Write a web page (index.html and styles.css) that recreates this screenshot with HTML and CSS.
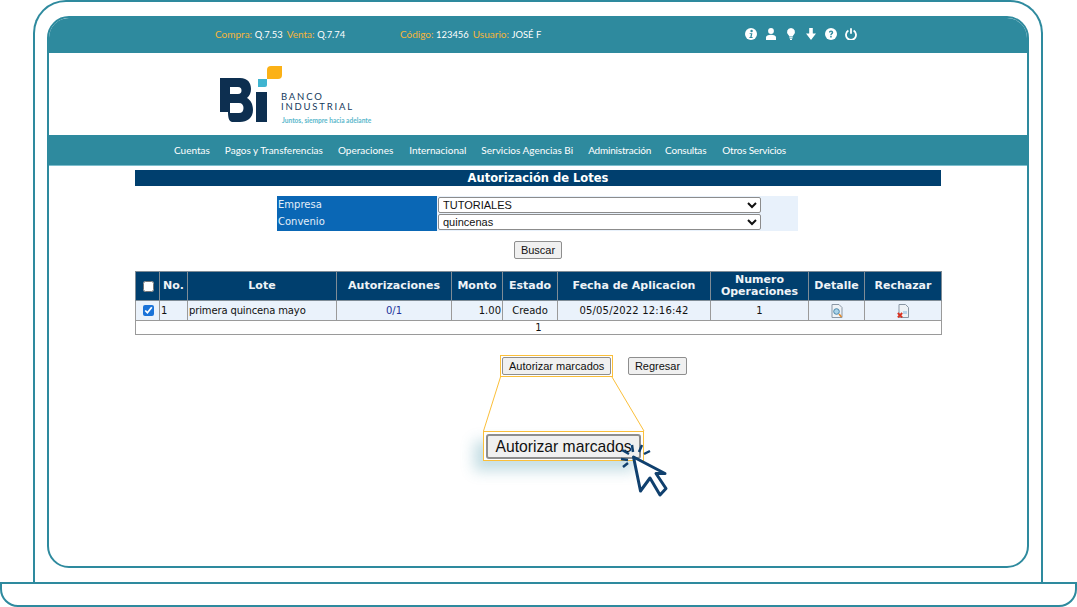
FILE: index.html
```html
<!DOCTYPE html>
<html lang="es">
<head>
<meta charset="utf-8">
<title>Autorización de Lotes</title>
<link rel="stylesheet" href="styles.css">
</head>
<body>
<div class="page">
  <div class="lid">
    <div class="screen">
      <header class="topbar">
        <div class="rates"><span class="key">Compra:</span> <b>Q.7.53</b><span class="key sp">Venta:</span> <b>Q.7.74</b></div>
        <div class="user"><span class="key">Código:</span> <b>123456</b><span class="key sp2">Usuario:</span> <b>JOSÉ F</b></div>
        <div class="tools">
          <svg class="ti" viewBox="0 0 12 12"><circle cx="6" cy="6" r="6" fill="#fff"/><circle cx="6.6" cy="3" r="1.2" fill="#2e8a9e"/><path d="M4.6 5.2h2.8L6.6 9h1v.9H4.4V9h.9l.6-2.9H4.6z" fill="#2e8a9e"/></svg>
          <svg class="ti" viewBox="0 0 12 12"><circle cx="6" cy="3" r="2.9" fill="#fff"/><path d="M1 12V9.5C1 7.5 3 6.7 6 6.7s5 .8 5 2.8V12z" fill="#fff"/></svg>
          <svg class="ti" viewBox="0 0 12 12"><path d="M6 0a4 4 0 0 1 2.6 7c-.6.6-.8 1-.8 1.6H4.2c0-.6-.2-1-.8-1.6A4 4 0 0 1 6 0z" fill="#fff"/><rect x="4.4" y="9.2" width="3.2" height="1.2" fill="#fff"/><rect x="5" y="10.8" width="2" height="1.2" fill="#fff"/></svg>
          <svg class="ti" viewBox="0 0 12 12"><path d="M4.2 0h3.6v5.6H11L6 12 1 5.6h3.2z" fill="#fff"/></svg>
          <svg class="ti" viewBox="0 0 12 12"><circle cx="6" cy="6" r="6" fill="#fff"/><path d="M3.9 4.6C3.9 3.3 4.8 2.5 6.1 2.5c1.2 0 2.1.8 2.1 1.9 0 1.6-1.6 1.6-1.6 2.9H5.2c0-1.9 1.5-1.9 1.5-2.8 0-.4-.2-.7-.6-.7-.5 0-.7.3-.8.8z" fill="#2e8a9e"/><rect x="5.2" y="8" width="1.5" height="1.5" fill="#2e8a9e"/></svg>
          <svg class="ti" viewBox="0 0 12 12"><path d="M3.4 2.6a5 5 0 1 0 5.2 0" fill="none" stroke="#fff" stroke-width="1.8"/><path d="M6 .3v5.4" stroke="#fff" stroke-width="1.8"/></svg>
        </div>
      </header>
      <div class="brandband">
        <svg class="mark" viewBox="0 0 62 56">
          <path fill-rule="evenodd" fill="#0d2f50" d="M0 12H20C28 12 31 17 31 23C31 27 29.500 30 27 32C30.500 34 33 38 33 44C33 52 27 56 20 56H13C10 56 8 54 8 46H0ZM10 21V28H18C20.500 28 21.500 26.500 21.500 24.500C21.500 22.500 20.500 21 18 21ZM10 37V47H19C22 47 23.500 45 23.500 42C23.500 39 22 37 19 37Z"/>
          <rect x="36" y="26" width="11" height="30" fill="#0d2f50"/>
          <path d="M38 13h9v6q0 2-2 2h-7z" fill="#3fb4d0"/>
          <path d="M51 0h11v9q0 4-4 4H47V4q0-4 4-4z" fill="#fbb116"/>
        </svg>
        <div class="brandtext">
          <div class="bname">BANCO</div>
          <div class="bname">INDUSTRIAL</div>
          <div class="tagline">Juntos, siempre hacia adelante</div>
        </div>
      </div>
      <nav class="mainnav">
        <a>Cuentas</a><a>Pagos y Transferencias</a><a>Operaciones</a><a class="nudge">Internacional</a><a>Servicios Agencias Bi</a><a class="slim">Administración</a><a class="slim back">Consultas</a><a class="slim fwd">Otros Servicios</a>
      </nav>
      <main class="content">
        <h1 class="title">Autorización de Lotes</h1>
        <div class="filters">
          <div class="labels"><div>Empresa</div><div>Convenio</div></div>
          <div class="selects">
            <select class="sel"><option>TUTORIALES</option></select>
            <select class="sel"><option>quincenas</option></select>
          </div>
          <div class="filler"></div>
        </div>
        <div class="searchrow"><button class="btn">Buscar</button></div>
        <table class="grid">
          <colgroup><col class="c1"><col class="c2"><col class="c3"><col class="c4"><col class="c5"><col class="c6"><col class="c7"><col class="c8"><col class="c9"><col class="c10"></colgroup>
          <thead>
            <tr>
              <th><input class="chk" type="checkbox"></th><th>No.</th><th>Lote</th><th>Autorizaciones</th><th>Monto</th><th>Estado</th><th>Fecha de Aplicacion</th><th class="tight">Numero Operaciones</th><th>Detalle</th><th>Rechazar</th>
            </tr>
          </thead>
          <tbody>
            <tr class="row">
              <td class="ctr"><input class="chk" type="checkbox" checked></td><td>1</td><td class="name">primera quincena mayo</td><td class="ctr link">0/1</td><td class="num">1.00</td><td class="ctr">Creado</td><td class="ctr date">05/05/2022 12:16:42</td><td class="ctr">1</td>
              <td class="ctr"><svg class="doc" viewBox="0 0 12 14"><path d="M1 .5h7l3 3v10H1z" fill="#eef2f6" stroke="#8a97a5"/><circle cx="5.500" cy="7.500" r="2.800" fill="#a9d3ea" stroke="#4c86a8"/><path d="M8 10l2.500 3" stroke="#e08a2c" stroke-width="1.600"/></svg></td>
              <td class="ctr"><svg class="doc" viewBox="0 0 12 14"><path d="M2 .5h6.500l3 3v10H2z" fill="#eef2f6" stroke="#8a97a5"/><rect x="6" y="7" width="4" height="3" fill="#b9d2ea"/><path d="M.8 9l4.400 4.400M5.200 9L.8 13.400" stroke="#d8301f" stroke-width="1.800"/></svg></td>
            </tr>
            <tr class="pager"><td class="ctr" colspan="10">1</td></tr>
          </tbody>
        </table>
        <div class="actions">
          <span class="focus"><button class="btn">Autorizar marcados</button></span>
          <button class="btn back-btn">Regresar</button>
        </div>
      </main>
    </div>
  </div>
  <div class="base"></div>

  <svg class="overlay" viewBox="0 0 1077 607">
    <path d="M500.500 377L483.500 431M612 377L644 431" fill="none" stroke="#fbbf3a" stroke-width="1"/>
  </svg>
  <div class="zoombox"><button class="btn big">Autorizar marcados</button></div>
  <svg class="overlay" viewBox="0 0 1077 607">
    <path d="M633.500 457L640.500 491L650 478L660 495L666 488.500L656 473.500L665 473.500Z" fill="#fff" stroke="#10406e" stroke-width="3" stroke-linejoin="round"/>
    <path d="M621 459L628 460M623 467L628 463M622 450L629 454M632 445L633 452M642 445L639 452M650 451L644 454" fill="none" stroke="#10406e" stroke-width="2.500"/>
  </svg>
</div>
</body>
</html>
```
FILE: styles.css
```css
* { box-sizing: border-box; }
html, body { margin: 0; padding: 0; background: #fff; overflow: hidden; }
.page { position: relative; width: 1077px; height: 607px; overflow: hidden; }

.lid {
  width: 1010px;
  height: 582px;
  margin-left: 33px;
  padding: 14px 12px 0 12px;
  border: 2px solid #2e8a9e;
  border-bottom: 0;
  border-radius: 33px 33px 0 0;
}
.screen {
  height: 552px;
  border: 2px solid #2e8a9e;
  border-radius: 22px;
  overflow: hidden;
  background: #fff;
}
.base {
  height: 25px;
  border: 2px solid #2e8a9e;
  border-radius: 0 0 18px 18px;
}

.topbar {
  display: flex;
  align-items: center;
  height: 35px;
  padding: 0 0 3px 166px;
  background: #2e8a9e;
  font: 10px/1 Lato, sans-serif;
  color: #fff;
}
.topbar b { font-weight: 400; font-size: 9.400px; }
.key { color: #f5b53a; }
.sp { margin-left: 4px; }
.sp2 { margin-left: 4px; }
.rates { width: 185px; }
.user { width: 345px; }
.tools { display: flex; gap: 8px; }
.ti { width: 12px; height: 12px; display: block; }

.brandband {
  display: flex;
  height: 82px;
  padding: 13px 0 0 171px;
  background: #fff;
}
.mark { width: 62px; height: 56px; display: block; }
.brandtext { margin: 26px 0 0 -1px; }
.bname {
  font: 9.500px/10px Lato, sans-serif;
  letter-spacing: 1.800px;
  color: #15395c;
}
.tagline {
  margin-top: 5px;
  margin-left: 1px;
  font: 700 6.600px/7px Lato, sans-serif;
  color: #5bb8cc;
  white-space: nowrap;
}

.mainnav {
  display: flex;
  gap: 15px;
  align-items: center;
  height: 31px;
  padding-left: 125px;
  background: #2e8a9e;
  border-bottom: 1px solid #7dbecd;
  font: 10px/1 Lato, sans-serif;
  color: #fff;
}
.nudge { margin-left: 1px; }
.slim { letter-spacing: -.2px; }
.back { margin-left: -1px; }
.fwd { margin-left: 1px; }

.content { padding: 4px 86px 0 86px; }
.title {
  height: 16px;
  margin: 0;
  background: #003f6e;
  color: #fff;
  font: 700 11.500px/16px "DejaVu Sans", sans-serif;
  text-align: center;
}
.filters {
  display: flex;
  width: 521px;
  height: 35px;
  margin: 10px 0 0 142px;
  background: #e8f1fb;
}
.labels {
  width: 160px;
  padding-left: 1px;
  background: #0a67b5;
  color: #e3eef8;
  font: 10px/17px "DejaVu Sans", sans-serif;
}
.selects { display: flex; flex-direction: column; gap: 1px; width: 324px; padding: 1px 0 0 1px; }
.sel {
  width: 323px;
  height: 16px;
  padding: 0;
  font: 11px/14px "Liberation Sans", sans-serif;
  background: #fff;
  color: #111;
  border: 1px solid #8c8c8c;
  border-radius: 2px;
}
.filler { flex: 1; }
.searchrow { display: flex; justify-content: center; margin-top: 10px; }
.btn {
  height: 18px;
  padding: 0 6px;
  font: 11px/14px "Liberation Sans", sans-serif;
  color: #111;
  background: #f0f0f0;
  border: 1px solid #8e8e8e;
  border-radius: 2px;
}
.grid {
  width: 806px;
  margin-top: 12px;
  border-collapse: collapse;
  table-layout: fixed;
  font: 10px/13px "DejaVu Sans", sans-serif;
  color: #111;
}
.c1 { width: 24px; } .c2 { width: 28px; } .c3 { width: 149px; } .c4 { width: 115px; } .c5 { width: 51px; }
.c6 { width: 55px; } .c7 { width: 153px; } .c8 { width: 98px; } .c9 { width: 56px; } .c10 { width: 77px; }
.grid th {
  height: 29px;
  padding: 0 1px;
  background: #003f6e;
  color: #eef3f7;
  border: 1px solid #7f8c96;
  font: 700 11px/12px "DejaVu Sans", sans-serif;
}
.grid td { border: 1px solid #9a9a9a; padding: 0 1px; }
.row td { height: 20px; background: #eaf2fb; }
.pager td { height: 14px; background: #fff; line-height: 12px; }
.ctr { text-align: center; }
.num { text-align: right; }
.grid .link { color: #22339a; }
.name { letter-spacing: -.14px; }
.date { letter-spacing: .18px; }
.chk { display: block; width: 11px; height: 11px; margin: 0 0 0 6px; accent-color: #1a73d8; }
.doc { display: block; width: 12px; height: 14px; margin: 1px auto 0; }

.actions {
  display: flex;
  align-items: center;
  gap: 15px;
  margin: 20px 0 0 365px;
}
.focus { display: block; padding: 1px; border: 1px solid #fbbf3a; }
.focus .btn { display: block; }
.back-btn { padding: 0 5.500px; }

.overlay { position: absolute; left: 0; top: 0; width: 1077px; height: 607px; pointer-events: none; }
.zoombox {
  position: absolute;
  left: 483px;
  top: 431px;
  width: 161px;
  height: 30px;
  padding: 2px;
  border: 1px solid #fbbf3a;
  background: #fff;
  box-shadow: -9px 10px 14px rgba(46, 138, 158, .28);
}
.btn.big {
  display: block;
  width: 155px;
  height: 25px;
  padding: 0;
  font-size: 15.700px;
  line-height: 20px;
  border: 2px solid #8e8e8e;
  border-radius: 3px;
}
```
